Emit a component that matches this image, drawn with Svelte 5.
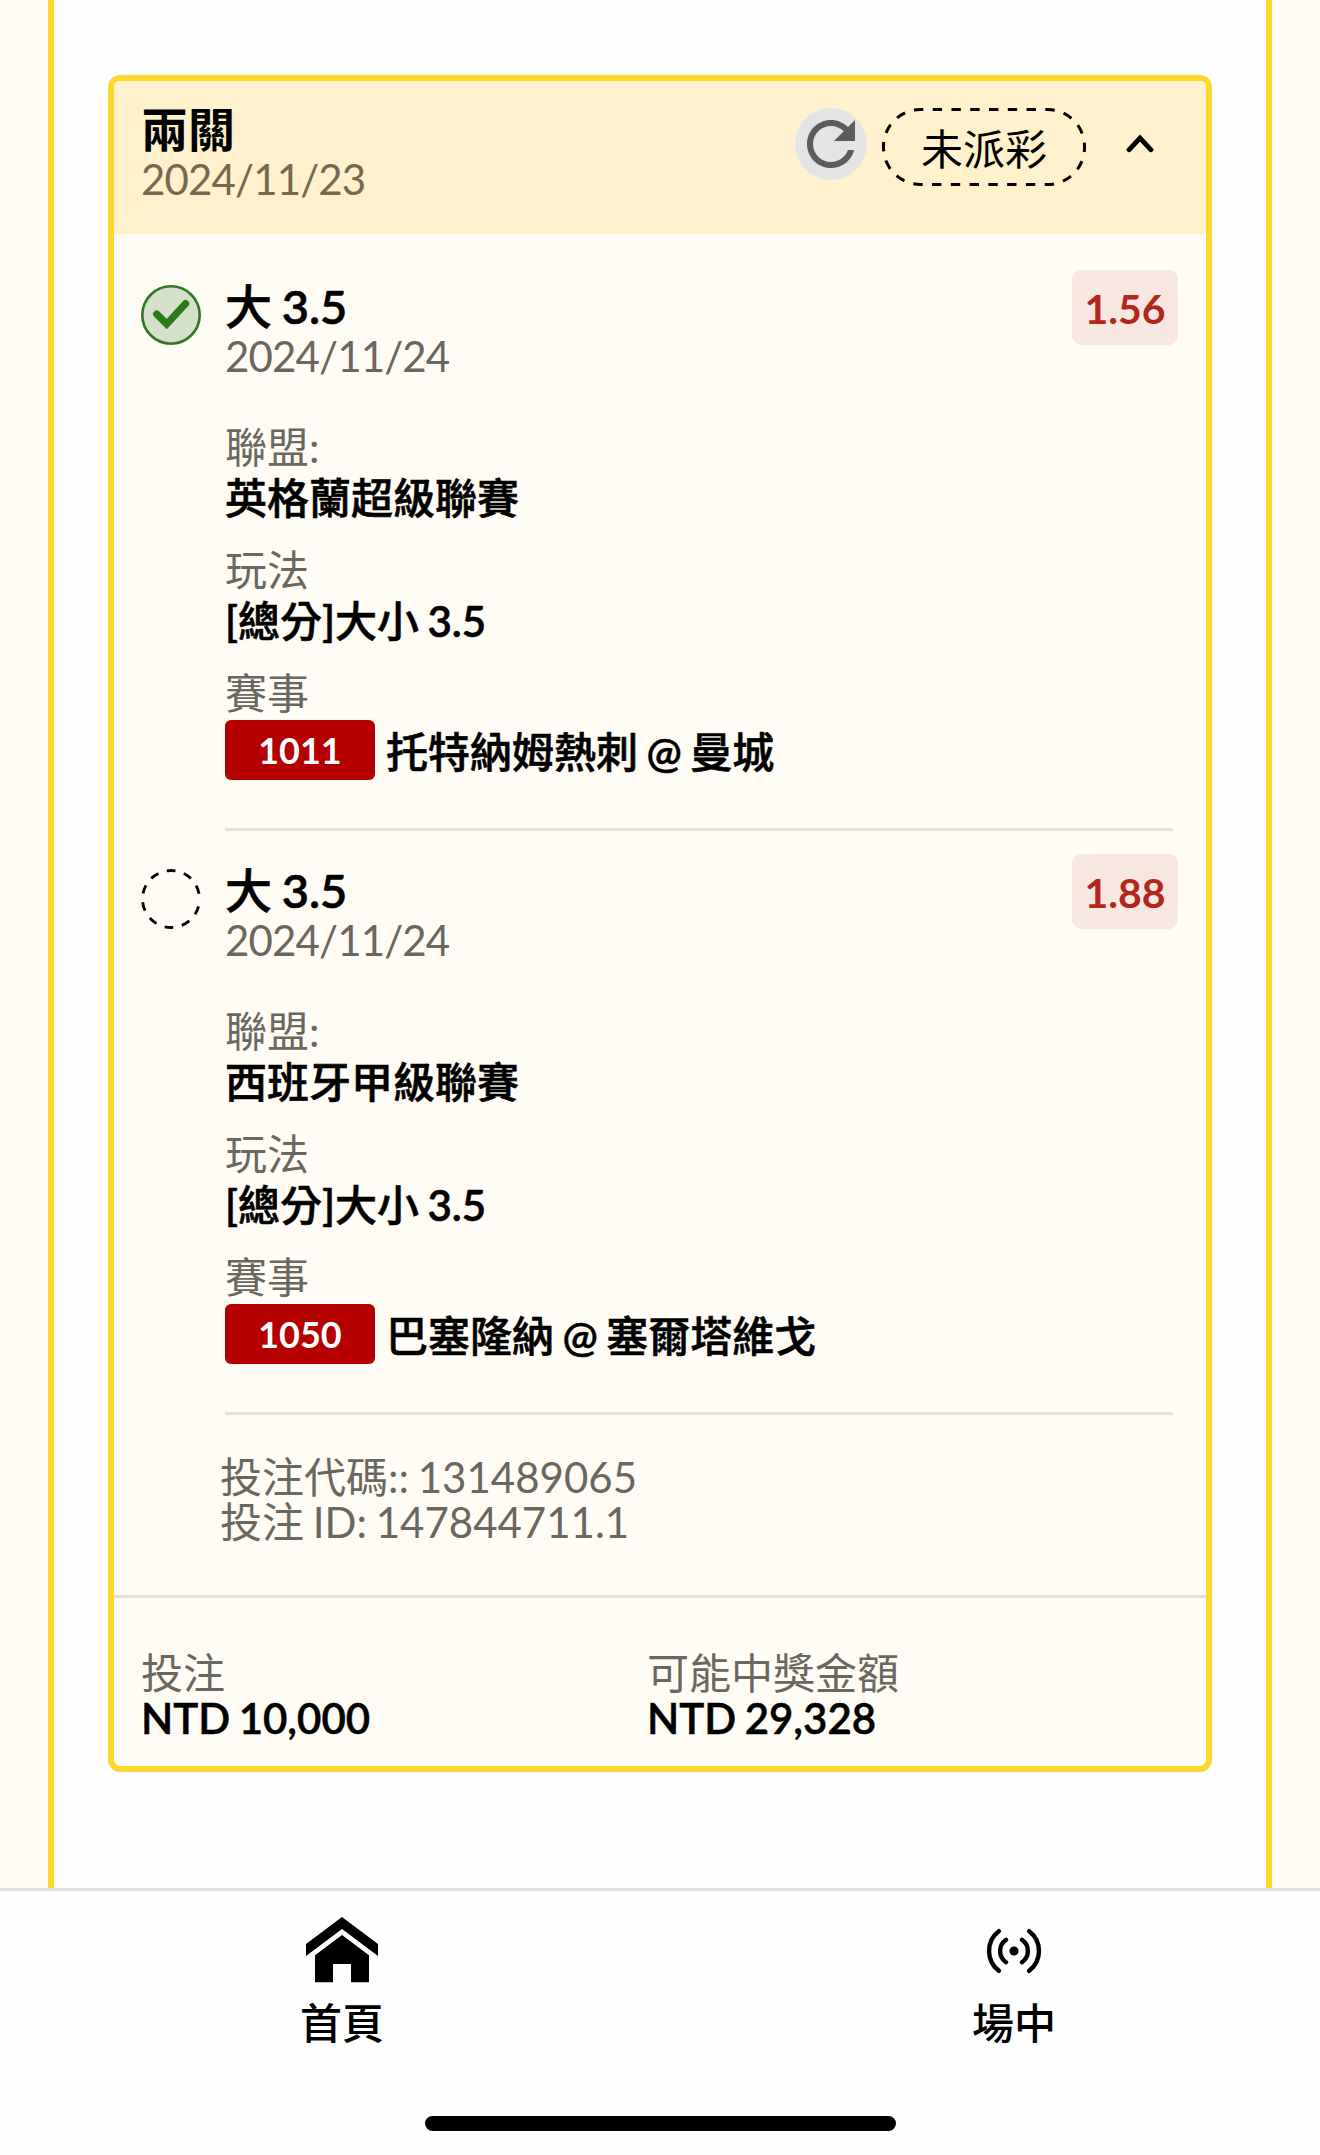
<script>
  let open = true;

  const slip = {
    title: '兩關',
    date: '2024/11/23',
    status: '未派彩',
    code: '131489065',
    betId: '147844711.1',
    stake: 'NTD 10,000',
    payout: 'NTD 29,328',
  };

  const legs = [
    {
      pick: '大 3.5',
      date: '2024/11/24',
      odds: '1.56',
      won: true,
      league: '英格蘭超級聯賽',
      market: '[總分]大小 3.5',
      matchNo: '1011',
      match: '托特納姆熱刺 @ 曼城',
    },
    {
      pick: '大 3.5',
      date: '2024/11/24',
      odds: '1.88',
      won: false,
      league: '西班牙甲級聯賽',
      market: '[總分]大小 3.5',
      matchNo: '1050',
      match: '巴塞隆納 @ 塞爾塔維戈',
    },
  ];
</script>

<div class="screen">
  <main class="page">
    <section class="card">
      <header class="card-header">
        <div class="heading">
          <h2>{slip.title}</h2>
          <div class="date">{slip.date}</div>
        </div>
        <button class="refresh" aria-label="refresh">
          <svg viewBox="0 0 24 24" width="72" height="72">
            <path
              fill="#5c5c5c"
              d="M17.65 6.35C16.2 4.9 14.21 4 12 4c-4.42 0-7.99 3.58-7.99 8s3.57 8 7.99 8c3.73 0 6.84-2.55 7.73-6h-2.08c-.82 2.33-3.04 4-5.65 4-3.31 0-6-2.69-6-6s2.69-6 6-6c1.66 0 3.14.69 4.22 1.78L13 11h7V4l-2.35 2.35z"
            />
          </svg>
        </button>
        <div class="status">
          <svg class="status-outline" viewBox="0 0 204 78" width="204" height="78">
            <rect x="1.5" y="1.5" width="201" height="75" rx="37" pathLength="260" />
          </svg>
          {slip.status}
        </div>
        <button class="toggle" aria-label="toggle" on:click={() => (open = !open)}>
          <svg viewBox="0 0 28 20" width="28" height="20">
            <path d="M3 16.8 L14 5 L25 16.8" fill="none" stroke="#000" stroke-width="4.8" stroke-linecap="round" />
          </svg>
        </button>
      </header>

      {#if open}
        <div class="legs">
          {#each legs as leg}
            <article class="leg">
              <div class="leg-icon">
                {#if leg.won}
                  <svg viewBox="0 0 60 60" width="60" height="60">
                    <circle cx="30" cy="30" r="28.7" fill="#d5e0ca" stroke="#2f7626" stroke-width="2.6" />
                    <path d="M15.8 29.2 L25.7 39.1 L44.6 18.6" fill="none" stroke="#2b7a1a" stroke-width="7.3" stroke-linecap="round" />
                  </svg>
                {:else}
                  <svg viewBox="0 0 60 60" width="60" height="60">
                    <circle class="pending" cx="30" cy="30" r="28.5" />
                  </svg>
                {/if}
              </div>
              <div class="leg-body">
                <div class="leg-top">
                  <div>
                    <h3>{leg.pick}</h3>
                    <div class="date">{leg.date}</div>
                  </div>
                  <span class="odds">{leg.odds}</span>
                </div>
                <dl>
                  <dt>聯盟:</dt>
                  <dd>{leg.league}</dd>
                  <dt>玩法</dt>
                  <dd>{leg.market}</dd>
                  <dt>賽事</dt>
                  <dd class="match">
                    <span class="match-no">{leg.matchNo}</span>
                    <span>{leg.match}</span>
                  </dd>
                </dl>
              </div>
            </article>
          {/each}
        </div>

        <div class="codes">
          <div>投注代碼:: {slip.code}</div>
          <div>投注 ID: {slip.betId}</div>
        </div>
      {/if}

      <footer class="totals">
        <div>
          <div class="label">投注</div>
          <div class="amount">{slip.stake}</div>
        </div>
        <div>
          <div class="label">可能中獎金額</div>
          <div class="amount">{slip.payout}</div>
        </div>
      </footer>
    </section>
  </main>

  <nav>
    <div class="tabs">
      <div class="tab">
        <div class="tab-icon">
          <svg viewBox="0 0 72 66" width="72" height="66">
            <path d="M0 27 L36 0 L72 27 V39 L36 12 L0 39 Z" />
            <path d="M36 18 L63 38.3 V65.3 H45 V47 H27 V65.3 H9 V38.3 Z" />
          </svg>
        </div>
        <span>首頁</span>
      </div>
      <div class="tab">
        <div class="tab-icon">
          <svg viewBox="-30 -34 60 66" width="60" height="66">
            <circle r="4.6" />
            <path
              d="M-8 -11.3 A13.8 13.8 0 0 0 -8 11.3 M8 -11.3 A13.8 13.8 0 0 1 8 11.3 M-15.2 -19.8 A25 25 0 0 0 -15.2 19.8 M15.2 -19.8 A25 25 0 0 1 15.2 19.8"
              fill="none"
              stroke="#000"
              stroke-width="4.4"
              stroke-linecap="round"
            />
          </svg>
        </div>
        <span>場中</span>
      </div>
    </div>
    <div class="home-bar"></div>
  </nav>
</div>

<style>
:global(body) {
  margin: 0;
  background: #fffcf5;
}
.screen {
  display: flex;
  flex-direction: column;
  width: 1320px;
  height: 2155px;
  overflow: hidden;
  font-family: Lato, 'Noto Sans CJK TC', sans-serif;
  font-size: 42px;
  word-spacing: -2px;
  color: #000;
}
svg {
  display: block;
}
h2, h3, dl, dd {
  margin: 0;
}
button {
  border: none;
  background: none;
  padding: 0;
  cursor: pointer;
}
.page {
  box-sizing: border-box;
  height: 1888px;
  margin: 0 48px;
  padding: 75px 54px 0;
  background: #fefefe;
  border: solid #fcd82d;
  border-width: 0 6px;
}
.card {
  display: flex;
  flex-direction: column;
  box-sizing: border-box;
  height: 1697px;
  border: 6px solid #fcd82d;
  border-radius: 12px;
  background: #fffcf5;
}
.card-header {
  display: flex;
  align-items: flex-start;
  box-sizing: border-box;
  height: 153px;
  padding: 24px 52px 0 27px;
  background: #fef1cb;
  border-radius: 5px 5px 0 0;
}
.heading {
  flex: 1;
}
h2, h3 {
  font-size: 47px;
  line-height: 48px;
  font-weight: 700;
}
h3, dd {
  font-family: Lato, 'Noto Sans CJK TC Medium', 'Noto Sans CJK TC', sans-serif;
  font-weight: 600;
  font-synthesis: none;
  -webkit-text-stroke: 0.6px #000;
}
.date {
  line-height: 50px;
  letter-spacing: -0.85px;
  color: #6a675f;
}
.card-header .date {
  margin-top: 1px;
  color: #756a50;
}
.refresh {
  width: 72px;
  height: 72px;
  margin-top: 3px;
  border-radius: 50%;
  background: #e4e4e6;
}
.status {
  position: relative;
  width: 204px;
  height: 78px;
  margin: 3px 0 0 15px;
  line-height: 82px;
  text-align: center;
}
.status-outline {
  position: absolute;
  inset: 0;
}
.status-outline rect {
  fill: none;
  stroke: #000;
  stroke-width: 3;
  stroke-dasharray: 5 5;
  stroke-dashoffset: 3.5;
}
.toggle {
  margin: 28px 0 0 40px;
}
.legs {
  padding-top: 13px;
}
.leg {
  display: flex;
  height: 584px;
  padding: 0 33px 0 27px;
}
.leg-icon {
  width: 84px;
  padding-top: 38px;
}
.pending {
  fill: none;
  stroke: #000;
  stroke-width: 2.8;
  stroke-dasharray: 8.7 8.8;
  stroke-dashoffset: -7.4;
}
.leg-body {
  flex: 1;
  box-sizing: border-box;
  border-bottom: 3px solid #e4e2dc;
}
.leg-top {
  display: flex;
  justify-content: space-between;
  height: 175px;
}
h3 {
  margin-top: 34px;
  line-height: 50px;
}
.odds {
  width: 106px;
  height: 75px;
  margin: 23px -5px 0 0;
  border-radius: 9px;
  background: #f7e7e0;
  color: #b3261e;
  font-size: 41px;
  font-weight: 700;
  line-height: 77px;
  text-align: center;
}
dt {
  line-height: 51px;
  color: #6a675f;
}
dd {
  margin-bottom: 22px;
  line-height: 50px;
}
.match {
  display: flex;
  gap: 11px;
  margin: 1px 0 0;
  line-height: 64px;
}
.match-no {
  width: 150px;
  height: 60px;
  border-radius: 6px;
  background: #b50000;
  color: #fff;
  font-size: 36px;
  font-weight: 700;
  line-height: 60px;
  text-align: center;
  -webkit-text-stroke: 0;
}
.codes {
  flex: 1;
  padding: 40px 0 0 106px;
  line-height: 45px;
  color: #6a675f;
}
.totals {
  display: grid;
  grid-template-columns: 506px 1fr;
  box-sizing: border-box;
  height: 171px;
  padding: 53px 0 0 27px;
  border-top: 3px solid #e4e2dc;
  line-height: 45px;
}
.label {
  color: #6a675f;
}
.amount {
  font-weight: 600;
  -webkit-text-stroke: 0.5px #000;
}
nav {
  display: flex;
  flex-direction: column;
  align-items: center;
  box-sizing: border-box;
  height: 267px;
  border-top: 3px solid #e2e2e2;
  background: #fefefe;
}
.tabs {
  display: grid;
  grid-template-columns: 672px 672px;
  width: 1320px;
  height: 225px;
  padding-left: 12px;
}
.tab {
  display: flex;
  flex-direction: column;
  align-items: center;
  padding-top: 26px;
  font-weight: 500;
  line-height: 50px;
}
.tab-icon {
  height: 81px;
}
.home-bar {
  width: 471px;
  height: 15px;
  border-radius: 8px;
  background: #000;
}
</style>
